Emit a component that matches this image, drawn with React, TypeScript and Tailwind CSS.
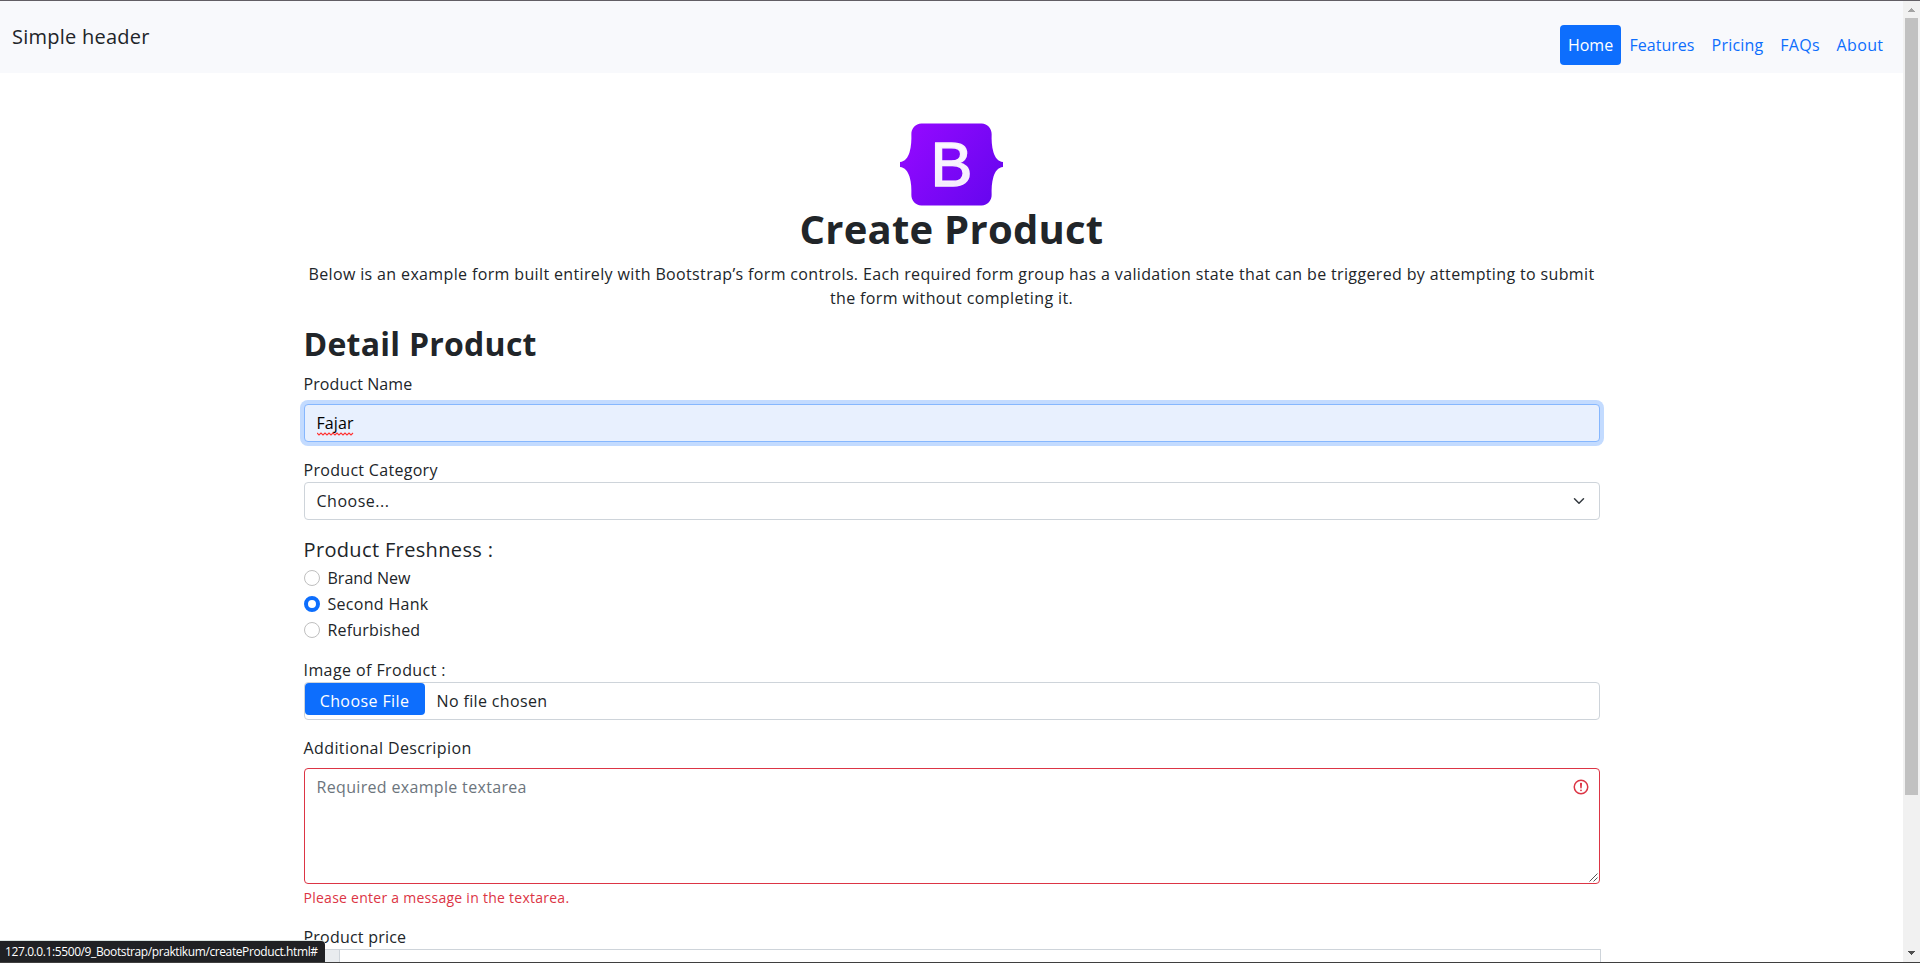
import type { ReactNode } from 'react';

const links = [
  { label: 'Home', cls: 'w-[61px] bg-[#0d6efd] text-white' },
  { label: 'Features', cls: 'w-[82px] text-[#0d6efd]' },
  { label: 'Pricing', cls: 'w-[69px] tracking-[0.2px] text-[#0d6efd]' },
  { label: 'FAQs', cls: 'w-[56px] tracking-[0.3px] text-[#0d6efd]' },
  { label: 'About', cls: 'w-[64px] tracking-[0.35px] text-[#0d6efd]' },
];

const radios = [
  { label: 'Brand New', cls: '', checked: false },
  { label: 'Second Hank', cls: 'tracking-[0.3px]', checked: true },
  { label: 'Refurbished', cls: 'tracking-[0.2px]', checked: false },
];

function Label({ children, className = '' }: { children: ReactNode; className?: string }) {
  return <label className={`block h-6 whitespace-nowrap ${className}`}>{children}</label>;
}

function BootstrapLogo() {
  return (
    <svg width="103" height="83" viewBox="0 0 118 94" className="mx-auto block">
      <defs>
        <linearGradient id="shell" x1="0" y1="0" x2="118" y2="94" gradientUnits="userSpaceOnUse">
          <stop offset="0.08" stopColor="#9309ff" />
          <stop offset="0.92" stopColor="#6706ef" />
        </linearGradient>
        <linearGradient id="letter" x1="0" y1="0" x2="0" y2="1">
          <stop stopColor="#fff" />
          <stop offset="1" stopColor="#f1e5fc" />
        </linearGradient>
      </defs>
      <path
        fill="url(#shell)"
        d="M24.509 0c-6.733 0-11.715 5.893-11.492 12.284.214 6.14-.064 14.092-2.066 20.577C8.943 39.365 5.547 43.485 0 44.014v5.972c5.547.529 8.943 4.649 10.951 11.153 2.002 6.485 2.28 14.437 2.066 20.577C12.794 88.106 17.776 94 24.51 94H93.5c6.733 0 11.714-5.893 11.491-12.284-.214-6.14.064-14.092 2.066-20.577 2.009-6.504 5.396-10.624 10.943-11.153v-5.972c-5.547-.529-8.934-4.649-10.943-11.153-2.002-6.484-2.28-14.437-2.066-20.577C105.214 5.894 100.233 0 93.5 0H24.508z"
      />
      <text
        x="35"
        y="72"
        fontSize="72"
        fill="url(#letter)"
        stroke="#f8f0fe"
        strokeWidth="1.6"
        className="font-['Liberation_Sans',sans-serif]"
      >
        B
      </text>
    </svg>
  );
}

function Scrollbar() {
  return (
    <div className="flex w-[17px] shrink-0 flex-col items-center bg-[#f1f1f1]">
      <svg width="17" height="17" viewBox="0 0 17 17" shapeRendering="crispEdges" className="shrink-0">
        <path d="M5 11h7v-1h-1v-1h-1v-1h-1v-1h-1v1h-1v1h-1v1h-1z" fill="#a3a3a3" />
      </svg>
      <div className="h-[777px] w-[13px] shrink-0 bg-[#c1c1c1]" />
      <svg width="17" height="17" viewBox="0 0 17 17" shapeRendering="crispEdges" className="mt-auto shrink-0">
        <path d="M5 6h7v1h-1v1h-1v1h-1v1h-1v-1h-1v-1h-1v-1h-1z" fill="#505050" />
      </svg>
    </div>
  );
}

export default function App() {
  return (
    <div className="relative flex h-[963px] w-full flex-col overflow-hidden border-b border-[#3f3f3f] bg-white font-['Open_Sans','Noto_Sans',sans-serif] text-base text-[#212529]">
      <div className="h-px shrink-0 bg-[#625f65]" />
      <div className="flex min-h-0 flex-1">
        <div className="min-w-0 flex-1 overflow-hidden">
          <header className="flex h-[72px] items-start justify-between bg-[#f8f9fc] pl-3 pr-[11px]">
            <span className="mt-[21px] text-xl leading-[30px] tracking-[0.25px]">Simple header</span>
            <nav className="mt-6 flex">
              {links.map((l) => (
                <a key={l.label} href="#" className={`h-10 rounded text-center leading-10 ${l.cls}`}>
                  {l.label}
                </a>
              ))}
            </nav>
          </header>

          <main className="mx-auto w-[1296px] pt-[50px]">
            <section className="mb-4 text-center">
              <BootstrapLogo />
              <h1 className="-mt-px mb-[9px] text-[40px] font-bold leading-[48px] tracking-[0.25px]">Create Product</h1>
              <p className="whitespace-nowrap leading-6">
                <span className="tracking-[0.36px]">
                  Below is an example form built entirely with Bootstrap’s form controls. Each required form group has a
                  validation state that can be triggered by attempting to submit
                </span>
                <br />
                <span className="tracking-[0.37px]">the form without completing it.</span>
              </p>
            </section>

            <h2 className="mb-2 h-[38px] text-[32px] font-bold leading-[36px] tracking-[0.25px]">Detail Product</h2>

            <Label className="mb-2 tracking-[0.1px]">Product Name</Label>
            <div className="mb-4 flex h-[38px] items-center rounded border border-[#86b7fe] bg-[#e8f0fe] px-3 text-black shadow-[0_0_0_4px_#c3dbff]">
              <span className="relative leading-6 tracking-[0.1px]">
                Fajar
                <svg width="38" height="4" viewBox="0 0 38 4" className="absolute left-0 top-[21px]">
                  <path
                    d="M0 1l2 2 2-2 2 2 2-2 2 2 2-2 2 2 2-2 2 2 2-2 2 2 2-2 2 2 2-2 2 2 2-2 2 2 2-2"
                    fill="none"
                    stroke="#f33"
                    strokeWidth="1.1"
                  />
                </svg>
              </span>
            </div>

            <Label className="tracking-[0.3px]">Product Category</Label>
            <div className="mb-4 flex h-[38px] items-center justify-between rounded border border-[#ced4da] px-3 tracking-[0.5px]">
              Choose...
              <svg width="16" height="12" viewBox="0 0 16 16" fill="none" stroke="#343a40" strokeWidth="2" strokeLinecap="round" strokeLinejoin="round">
                <path d="m2 5 6 6 6-6" />
              </svg>
            </div>

            <div className="mb-4">
              <div className="h-[30px] text-xl leading-7 tracking-[0.35px]">Product Freshness :</div>
              <div className="flex flex-col gap-0.5">
                {radios.map((r) => (
                  <label key={r.label} className={`flex h-6 items-center gap-2 ${r.cls}`}>
                    <span
                      className={
                        r.checked
                          ? 'size-4 rounded-full border-4 border-[#0d6efd] bg-white'
                          : 'size-4 rounded-full border border-[#bfbfbf] bg-white'
                      }
                    />
                    {r.label}
                  </label>
                ))}
              </div>
            </div>

            <Label className="tracking-[0.42px]">Image of Froduct :</Label>
            <div className="mb-4 flex h-[38px] items-start rounded border border-[#ced4da]">
              <span className="h-8 w-[120px] rounded bg-[#0d6efd] text-center leading-[36px] tracking-[0.4px] text-white">
                Choose File
              </span>
              <span className="ml-3 leading-[36px] tracking-[0.36px]">No file chosen</span>
            </div>

            <Label className="mb-2 tracking-[0.4px]">Additional Descripion</Label>
            <div className="relative mb-1 h-[116px] rounded border border-[#dc3545] px-3 py-1.5 leading-6 tracking-[0.33px] text-[#6c757d]">
              Required example textarea
              <svg width="18" height="18" viewBox="0 0 12 12" fill="none" stroke="#dc3545" className="absolute right-[9px] top-[9px]">
                <circle cx="6" cy="6" r="4.5" />
                <path strokeLinejoin="round" d="M5.8 3.6h.4L6 6.5z" />
                <circle cx="6" cy="8.2" r=".6" fill="#dc3545" stroke="none" />
              </svg>
              <svg width="9" height="9" viewBox="0 0 9 9" fill="none" stroke="#555" className="absolute bottom-px right-px">
                <path d="M0.5 8.5l8-8M4.5 8.5l4-4" />
              </svg>
            </div>
            <p className="mb-4 h-[21px] text-sm leading-5 tracking-[0.26px] text-[#dc3545]">
              Please enter a message in the textarea.
            </p>

            <Label className="tracking-[0.22px]">Product price</Label>
            <div className="flex h-[38px] w-[1297px]">
              <span className="w-9 rounded-l border border-[#ced4da] bg-[#e9ecef]" />
              <span className="-ml-px flex-1 border border-[#ced4da] bg-white" />
            </div>
          </main>
        </div>
        <Scrollbar />
      </div>
      <div className="absolute bottom-0 left-0 h-[21px] w-[325px] whitespace-nowrap rounded-tr bg-[#202124] pl-[5px] text-xs leading-[21px] tracking-[-0.4px] text-white shadow-[0_-1px_0_#dce4e2]">
        127.0.0.1:5500/9_Bootstrap/praktikum/createProduct.html#
      </div>
    </div>
  );
}
